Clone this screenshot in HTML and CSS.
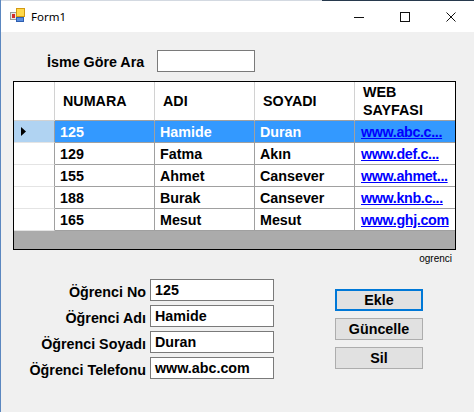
FILE: index.html
```html
<!DOCTYPE html>
<html lang="tr">
<head>
<meta charset="utf-8">
<title>Form1</title>
<link rel="stylesheet" href="styles.css">
</head>
<body>
<div class="window">
  <div class="topline"></div>
  <div class="titlebar">
    <div class="title-left">
      <svg class="app-icon" width="16" height="16" viewBox="0 0 16 16">
        <rect x="0.5" y="4.5" width="6" height="7" fill="#e6e6e6" stroke="#9a9a9a"/>
        <rect x="2" y="6" width="3" height="4" fill="#d42a2a"/>
        <rect x="6.5" y="0.5" width="8" height="8" fill="#ffd84a" stroke="#d39a12"/>
        <rect x="6.5" y="9.5" width="7" height="4" fill="#5a8ee0" stroke="#2e5fb0"/>
      </svg>
      <span class="title">Form1</span>
    </div>
    <div class="title-buttons">
      <div class="tbtn"><svg width="10" height="10" viewBox="0 0 10 10"><line x1="0" y1="5.5" x2="10" y2="5.5" stroke="#111" stroke-width="1"/></svg></div>
      <div class="tbtn"><svg width="10" height="10" viewBox="0 0 10 10"><rect x="0.5" y="0.5" width="9" height="9" fill="none" stroke="#111" stroke-width="1"/></svg></div>
      <div class="tbtn"><svg width="10" height="10" viewBox="0 0 10 10"><path d="M0.5 0.5L9.5 9.5M9.5 0.5L0.5 9.5" stroke="#111" stroke-width="1"/></svg></div>
    </div>
  </div>

  <div class="client">
    <div class="search-row">
      <span class="search-label">İsme Göre Ara</span>
      <div class="textbox search-box"></div>
    </div>

    <div class="dgv">
      <div class="dgv-grid">
        <div class="corner"></div>
        <div class="colhead">NUMARA</div>
        <div class="colhead">ADI</div>
        <div class="colhead">SOYADI</div>
        <div class="colhead last">WEB<br>SAYFASI</div>

        <div class="rowhead selected"><svg width="5" height="9" viewBox="0 0 5 9"><path d="M0 0L5 4.5L0 9Z" fill="#000"/></svg></div>
        <div class="cell sel">125</div>
        <div class="cell sel">Hamide</div>
        <div class="cell sel">Duran</div>
        <div class="cell sel last"><span class="link">www.abc.c...</span></div>

        <div class="rowhead"></div>
        <div class="cell">129</div>
        <div class="cell">Fatma</div>
        <div class="cell">Akın</div>
        <div class="cell last"><span class="link">www.def.c...</span></div>

        <div class="rowhead"></div>
        <div class="cell">155</div>
        <div class="cell">Ahmet</div>
        <div class="cell">Cansever</div>
        <div class="cell last"><span class="link">www.ahmet...</span></div>

        <div class="rowhead"></div>
        <div class="cell">188</div>
        <div class="cell">Burak</div>
        <div class="cell">Cansever</div>
        <div class="cell last"><span class="link">www.knb.c...</span></div>

        <div class="rowhead"></div>
        <div class="cell">165</div>
        <div class="cell">Mesut</div>
        <div class="cell">Mesut</div>
        <div class="cell last"><span class="link">www.ghj.com</span></div>
      </div>
      <div class="dgv-empty"></div>
    </div>

    <div class="source-label">ogrenci</div>

    <div class="edit-area">
      <div class="fields">
        <span class="field-label">Öğrenci No</span><div class="textbox">125</div>
        <span class="field-label">Öğrenci Adı</span><div class="textbox">Hamide</div>
        <span class="field-label">Öğrenci Soyadı</span><div class="textbox">Duran</div>
        <span class="field-label">Öğrenci Telefonu</span><div class="textbox">www.abc.com</div>
      </div>
      <div class="buttons">
        <div class="btn default">Ekle</div>
        <div class="btn">Güncelle</div>
        <div class="btn">Sil</div>
      </div>
    </div>
  </div>
</div>
</body>
</html>
```

FILE: styles.css
```css
html, body {
  margin: 0;
  padding: 0;
  background: #f0f0f0;
}

.window {
  width: 474px;
  height: 412px;
  box-sizing: border-box;
  border-left: 1px solid #5b87c0;
  background: #f0f0f0;
  overflow: hidden;
  font-family: "Liberation Sans", Arial, sans-serif;
  color: #000;
}

.topline {
  height: 1px;
  background: linear-gradient(to right, #d3d9e1 0, #d3d9e1 321px, #27394d 321px);
}

.titlebar {
  height: 31px;
  background: #fff;
  display: flex;
  align-items: center;
  justify-content: space-between;
}

.title-left {
  display: flex;
  align-items: center;
  padding-left: 9px;
  gap: 5px;
}

.app-icon {
  display: block;
  margin-top: -1px;
}

.title {
  font-family: "Noto Sans", "Open Sans", sans-serif;
  font-size: 11.5px;
  color: #000;
}

.title-buttons {
  display: flex;
  height: 31px;
}

.tbtn {
  width: 46px;
  height: 31px;
  display: flex;
  align-items: center;
  justify-content: center;
}

.tbtn svg {
  display: block;
}

.client {
  padding: 18px 0 0 12px;
}

.search-row {
  display: flex;
  align-items: center;
  height: 22px;
  padding-left: 34px;
}

.search-label,
.field-label,
.cell,
.colhead,
.textbox,
.btn {
  font-size: 14.3px;
  font-weight: bold;
}

.search-label {
  width: 110px;
  white-space: nowrap;
  padding-top: 2px;
}

.textbox {
  box-sizing: border-box;
  height: 22px;
  border: 1px solid #7a7a7a;
  background: #fff;
  padding-left: 4px;
  display: flex;
  align-items: center;
  white-space: nowrap;
}

.search-box {
  width: 98px;
}

/* DataGridView */
.dgv {
  margin-top: 9px;
  width: 443px;
  box-sizing: border-box;
  border: 1px solid #000;
  background: #ababab;
}

.dgv-grid {
  display: grid;
  grid-template-columns: 41px 100px 100px 100px 100px;
  grid-template-rows: 39px repeat(5, 22px);
  background: #fff;
}

.corner {
  box-sizing: border-box;
  background: #fff;
  border-right: 1px solid #d2d2d2;
  border-bottom: 1px solid #d2d2d2;
}

.colhead {
  box-sizing: border-box;
  background: #fff;
  border-right: 1px solid #d2d2d2;
  border-bottom: 1px solid #a0a0a0;
  display: flex;
  align-items: center;
  padding-left: 8px;
  line-height: 18px;
  white-space: nowrap;
}

.colhead.last {
  border-right: none;
}

.rowhead {
  box-sizing: border-box;
  background: #fff;
  border-right: 1px solid #a0a0a0;
  border-bottom: 1px solid #e4e4e4;
  display: flex;
  align-items: center;
  padding-left: 7px;
}

.rowhead svg {
  display: block;
}

.rowhead.selected {
  background: #b0d3f2;
}

.cell {
  box-sizing: border-box;
  border-right: 1px solid #a0a0a0;
  border-bottom: 1px solid #a0a0a0;
  display: flex;
  align-items: center;
  padding-left: 5px;
  white-space: nowrap;
  overflow: hidden;
  background: #fff;
}

.cell.last {
  border-right: none;
  padding-left: 6px;
}

.cell.sel {
  background: #3399ff;
  color: #fff;
}

.link {
  color: #0000ff;
  text-decoration: underline;
  letter-spacing: -0.35px;
}

.dgv-empty {
  height: 18px;
  background: #ababab;
}

.source-label {
  width: 443px;
  box-sizing: border-box;
  text-align: right;
  padding-right: 4px;
  margin-top: 3px;
  font-size: 10px;
  line-height: 12px;
  color: #000;
}

/* Edit area */
.edit-area {
  display: flex;
  align-items: flex-start;
  margin-top: 14px;
}

.fields {
  display: grid;
  grid-template-columns: 133px 124px;
  grid-auto-rows: 22px;
  column-gap: 4px;
  row-gap: 4px;
}

.field-label {
  text-align: right;
  white-space: nowrap;
  align-self: center;
  padding-top: 3px;
}

.buttons {
  display: flex;
  flex-direction: column;
  gap: 7px;
  margin-left: 61px;
  margin-top: 10px;
}

.btn {
  box-sizing: border-box;
  width: 88px;
  height: 22px;
  background: #e1e1e1;
  border: 1px solid #adadad;
  display: flex;
  align-items: center;
  justify-content: center;
}

.btn.default {
  border: 2px solid #0078d7;
}
```
